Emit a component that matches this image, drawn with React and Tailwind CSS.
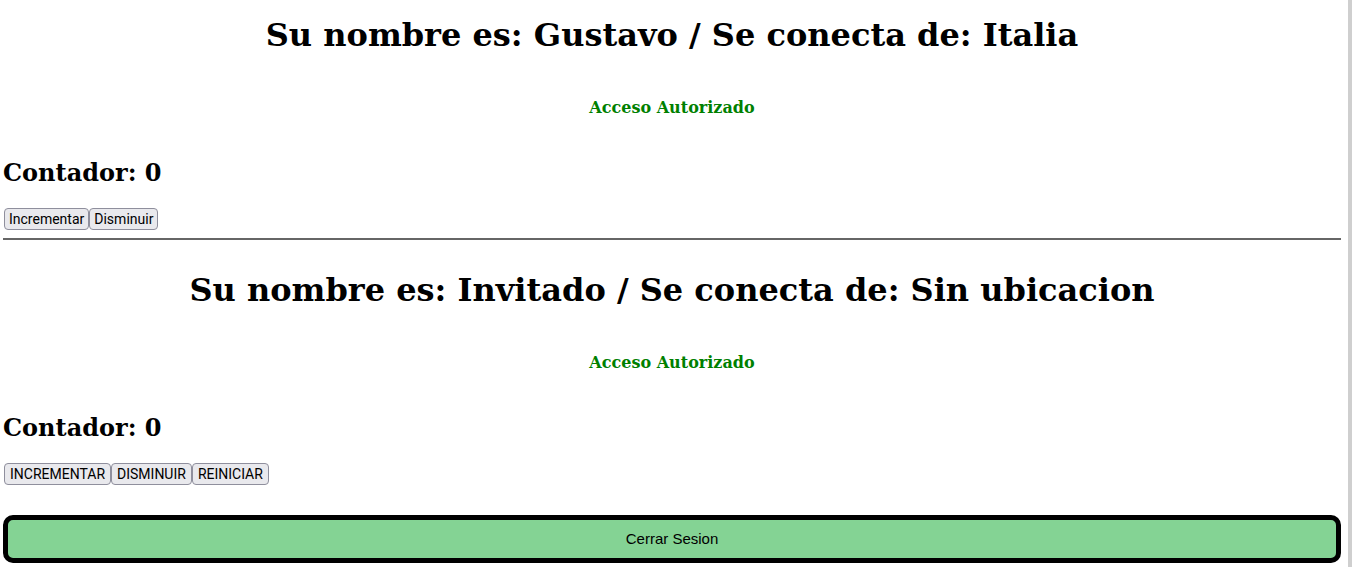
export default function App() {
  const serif = { fontFamily: '"DejaVu Serif", serif' };
  const btnBase =
    "border border-[#8f8f9d] rounded-[4px] bg-[#e9e9ed] h-[22px] text-[14px] text-black leading-none";
  const btn = btnBase + " px-[4px]";
  const btnWide = btnBase + " px-[5px]";
  const btnFont = { fontFamily: 'Roboto, sans-serif' };
  return (
    <div className="min-h-screen bg-white pl-[3px] pr-[11px] text-black" style={serif}>
      <div className="fixed right-0 top-0 h-full w-[4px] bg-[#cfcfcf]" />
      <section>
        <h1 className="pt-[17px] text-center text-[32px] font-bold leading-[37px]">
          Su nombre es: Gustavo / Se conecta de: Italia
        </h1>
        <h4 className="mt-[44px] text-center text-[16px] font-bold leading-[19px] text-[#008000]">
          Acceso Autorizado
        </h4>
        <h2 className="mt-[42px] text-[24px] font-bold leading-[28px]">Contador: 0</h2>
        <div className="mt-[21px] flex pl-[1px]" style={btnFont}>
          <button className={btn}>Incrementar</button>
          <button className={btn}>Disminuir</button>
        </div>
        <div className="mt-[8px] h-[2px] bg-[#666666]" />
      </section>
      <section>
        <h1 className="pt-[32px] text-center text-[32px] font-bold leading-[37px]">
          Su nombre es: Invitado / Se conecta de: Sin ubicacion
        </h1>
        <h4 className="mt-[44px] text-center text-[16px] font-bold leading-[19px] text-[#008000]">
          Acceso Autorizado
        </h4>
        <h2 className="mt-[42px] text-[24px] font-bold leading-[28px]">Contador: 0</h2>
        <div className="mt-[21px] flex pl-[1px]" style={btnFont}>
          <button className={btnWide}>INCREMENTAR</button>
          <button className={btnWide}>DISMINUIR</button>
          <button className={btnWide}>REINICIAR</button>
        </div>
      </section>
      <button
        className="mt-[30px] mb-[20px] block h-[48px] w-full rounded-[10px] border-[5px] border-black bg-[#84d394] text-[15px] text-black"
        style={{ fontFamily: '"Liberation Sans", Arial, sans-serif' }}
      >
        Cerrar Sesion
      </button>
    </div>
  );
}
